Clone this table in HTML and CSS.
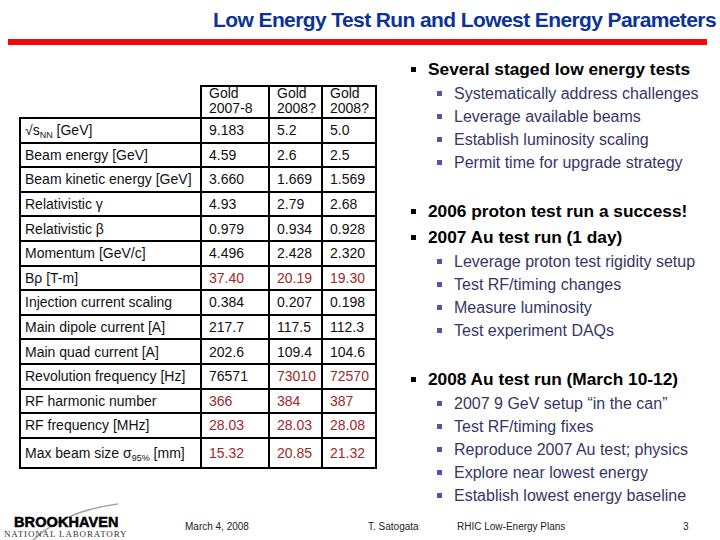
FILE: index.html
```html
<!DOCTYPE html>
<html>
<head>
<meta charset="utf-8">
<link rel="stylesheet" href="styles.css">
</head>
<body>
<div class="slide">
  <header class="header">
    <h1 class="title">Low Energy Test Run and Lowest Energy Parameters</h1>
    <div class="rule"></div>
  </header>
  <main class="content">
    <section class="left">
      <table class="params">
        <colgroup><col class="c1"><col class="c2"><col class="c3"><col class="c4"></colgroup>
        <tr class="head">
          <td class="blank"></td>
          <td><div class="hd">Gold<br>2007-8</div></td>
          <td><div class="hd">Gold<br>2008?</div></td>
          <td><div class="hd">Gold<br>2008?</div></td>
        </tr>
        <tr><td class="lbl">√s<sub>NN</sub> [GeV]</td><td>9.183</td><td>5.2</td><td>5.0</td></tr>
        <tr><td class="lbl">Beam energy [GeV]</td><td>4.59</td><td>2.6</td><td>2.5</td></tr>
        <tr><td class="lbl">Beam kinetic energy [GeV]</td><td>3.660</td><td>1.669</td><td>1.569</td></tr>
        <tr><td class="lbl">Relativistic γ</td><td>4.93</td><td>2.79</td><td>2.68</td></tr>
        <tr><td class="lbl">Relativistic β</td><td>0.979</td><td>0.934</td><td>0.928</td></tr>
        <tr><td class="lbl">Momentum [GeV/c]</td><td>4.496</td><td>2.428</td><td>2.320</td></tr>
        <tr><td class="lbl">Bρ [T-m]</td><td class="red">37.40</td><td class="red">20.19</td><td class="red">19.30</td></tr>
        <tr><td class="lbl">Injection current scaling</td><td>0.384</td><td>0.207</td><td>0.198</td></tr>
        <tr><td class="lbl">Main dipole current [A]</td><td>217.7</td><td>117.5</td><td>112.3</td></tr>
        <tr><td class="lbl">Main quad current [A]</td><td>202.6</td><td>109.4</td><td>104.6</td></tr>
        <tr><td class="lbl">Revolution frequency [Hz]</td><td>76571</td><td class="red">73010</td><td class="red">72570</td></tr>
        <tr><td class="lbl">RF harmonic number</td><td class="red">366</td><td class="red">384</td><td class="red">387</td></tr>
        <tr><td class="lbl">RF frequency [MHz]</td><td class="red">28.03</td><td class="red">28.03</td><td class="red">28.08</td></tr>
        <tr class="last"><td class="lbl">Max beam size σ<sub>95%</sub> [mm]</td><td class="red">15.32</td><td class="red">20.85</td><td class="red">21.32</td></tr>
      </table>
    </section>
    <section class="right">
      <ul class="points">
        <li class="main">Several staged low energy tests</li>
        <li class="group">
          <ul class="subs">
            <li>Systematically address challenges</li>
            <li>Leverage available beams</li>
            <li>Establish luminosity scaling</li>
            <li>Permit time for upgrade strategy</li>
          </ul>
        </li>
        <li class="main">2006 proton test run a success!</li>
        <li class="main">2007 Au test run (1 day)</li>
        <li class="group">
          <ul class="subs">
            <li>Leverage proton test rigidity setup</li>
            <li>Test RF/timing changes</li>
            <li>Measure luminosity</li>
            <li>Test experiment DAQs</li>
          </ul>
        </li>
        <li class="main">2008 Au test run (March 10-12)</li>
        <li class="group last-group">
          <ul class="subs">
            <li>2007 9 GeV setup “in the can”</li>
            <li>Test RF/timing fixes</li>
            <li>Reproduce 2007 Au test; physics</li>
            <li>Explore near lowest energy</li>
            <li>Establish lowest energy baseline</li>
          </ul>
        </li>
      </ul>
    </section>
  </main>
  <footer class="footer">
    <div class="logo">
      <svg class="swoosh" width="130" height="44" viewBox="0 0 130 44" aria-hidden="true">
        <path d="M30 42 Q 62 10 118 3" fill="none" stroke="#a6a6a6" stroke-width="1.6"/>
      </svg>
      <div class="bnl">BROOKHAVEN</div>
      <div class="lab">NATIONAL LABORATORY</div>
    </div>
    <div class="ft">March 4, 2008</div>
    <div class="ft">T. Satogata</div>
    <div class="ft">RHIC Low-Energy Plans</div>
    <div class="ft">3</div>
  </footer>
</div>
</body>
</html>
```
FILE: styles.css
```css
* { box-sizing: border-box; }
html, body { margin: 0; padding: 0; background: #fff; }
body { font-family: "Liberation Sans", Arial, sans-serif; color: #000; }

.slide {
  width: 720px;
  height: 540px;
  display: flex;
  flex-direction: column;
  overflow: hidden;
}

.header { padding-top: 8px; flex: none; }
.title {
  margin: 0;
  text-align: right;
  padding-right: 4px;
  font-size: 21px;
  line-height: 24px;
  font-weight: bold;
  color: #0b3399;
  letter-spacing: -0.6px;
}
.rule {
  margin: 7px 0 0 8px;
  width: 699px;
  height: 6px;
  background: #ee0a0a;
}

.content { flex: 1 1 0; min-height: 0; display: flex; }

.left { width: 405px; padding: 40px 0 0 19px; flex: none; }
.params {
  border-collapse: collapse;
  table-layout: fixed;
  width: 356px;
  font-size: 14px;
  color: #111;
}
.c1 { width: 181px; }
.c2 { width: 68px; }
.c3 { width: 53px; }
.c4 { width: 54px; }
.params td {
  border: 2px solid #000;
  padding: 0 0 0 7px;
  height: 24.6px;
  vertical-align: middle;
  white-space: nowrap;
  line-height: 16px;
}
.params td.lbl { padding-left: 4px; }
.params .head td { height: 32px; vertical-align: top; }
.params td.blank { border-top: none; border-left: none; }
.hd { line-height: 15px; margin-top: -1px; }
.params .last td { height: 30px; }
.params td.red { color: #a02828; }
.params sub { font-size: 9px; vertical-align: -3px; line-height: 0; }

.right { flex: 1; padding-top: 11px; }
.points, .subs { list-style: none; margin: 0; padding: 0; }
.main {
  display: flex;
  align-items: center;
  font-size: 17.3px;
  font-weight: bold;
  line-height: 26px;
  color: #000;
}
.main::before {
  content: "";
  width: 5px;
  height: 5px;
  background: #000;
  margin: 0 12px 0 6px;
  flex: none;
}
.group { margin-bottom: 24px; }
.group.last-group { margin-bottom: 0; }
.subs li {
  display: flex;
  align-items: center;
  font-size: 16px;
  line-height: 23px;
  color: #363666;
}
.subs li::before {
  content: "";
  width: 5px;
  height: 5px;
  background: #5252b0;
  margin: 0 12px 0 32px;
  flex: none;
}

.footer {
  height: 35px;
  flex: none;
  display: grid;
  grid-template-columns: 185px 183px 89px 226px 1fr;
}
.logo {
  position: relative;
  padding: 11px 0 0 12px;
}
.swoosh { position: absolute; left: 0; top: -4px; z-index: 1; display: block; }
.bnl {
  position: relative;
  z-index: 2;
  font-size: 14.5px;
  line-height: 13px;
  font-weight: bold;
  letter-spacing: 0.1px;
  color: #000;
  -webkit-text-stroke: 0.5px #000;
  padding-left: 2px;
}
.lab {
  position: relative;
  z-index: 2;
  font-family: "Liberation Serif", "Times New Roman", serif;
  font-size: 9px;
  line-height: 10px;
  letter-spacing: 0.85px;
  color: #333;
  margin-left: -8px;
}
.ft {
  padding-top: 16px;
  font-size: 10px;
  line-height: 12px;
  color: #222;
}
```
